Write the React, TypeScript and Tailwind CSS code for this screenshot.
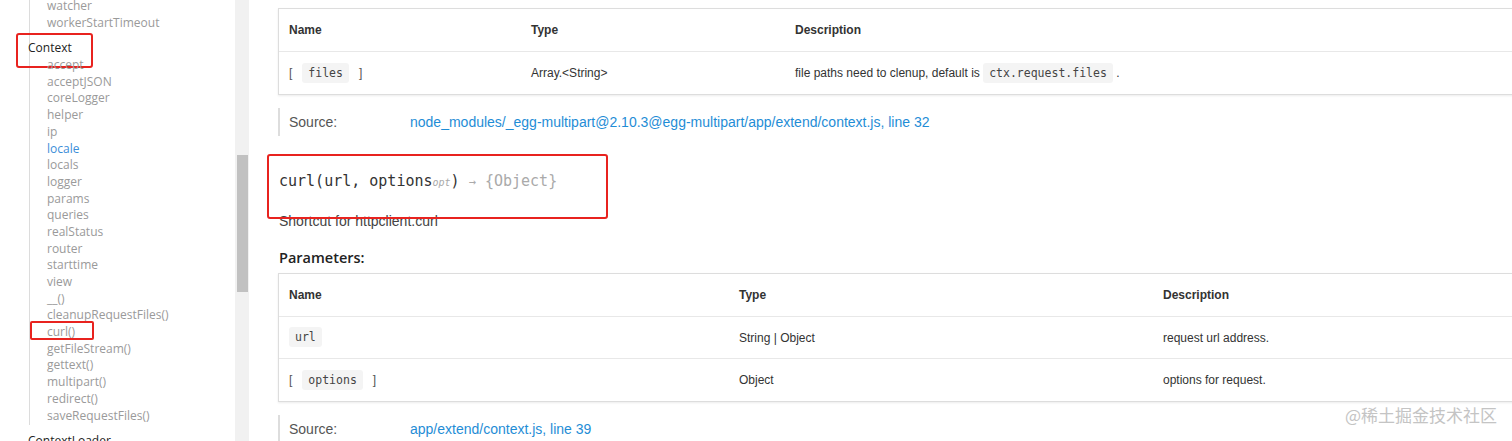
import React from "react";

const navTop = ["watcher", "workerStartTimeout"];
const navContext = [
  "accept",
  "acceptJSON",
  "coreLogger",
  "helper",
  "ip",
  "locale",
  "locals",
  "logger",
  "params",
  "queries",
  "realStatus",
  "router",
  "starttime",
  "view",
  "__()",
  "cleanupRequestFiles()",
  "curl()",
  "getFileStream()",
  "gettext()",
  "multipart()",
  "redirect()",
  "saveRequestFiles()",
];

const sans = { fontFamily: "'Liberation Sans', Arial, sans-serif" };
const mono = { fontFamily: "'DejaVu Sans Mono', 'Liberation Mono', monospace" };

const Code = ({ children }: { children: React.ReactNode }) => (
  <code
    className="rounded-[3px] bg-[#f4f4f4] px-[6px] py-[3px] text-[11.5px] text-[#444]"
    style={mono}
  >
    {children}
  </code>
);

const Optional = ({ children }: { children: React.ReactNode }) => (
  <span className="text-[#555]">
    [<span className="mx-[10px]">
      <Code>{children}</Code>
    </span>]
  </span>
);

const NavItem = ({ label }: { label: string }) => (
  <li className="relative h-[16.7px] leading-[16.7px]">
    <span className={label === "locale" ? "text-[#3b8ed8]" : "text-[#9a9a9a]"}>{label}</span>
    {label === "curl()" && (
      <span className="absolute left-[-17px] top-[-3px] h-[19px] w-[64px] rounded-[2px] border-2 border-[#e8231f]" />
    )}
  </li>
);

const Sidebar = () => (
  <div
    className="w-[235px] shrink-0 overflow-hidden bg-white text-[12px]"
    style={{ fontFamily: "'Open Sans', Lato, sans-serif" }}
  >
    <div className="mt-[-2px] ml-[29px] border-l border-[#dcdcdc] pl-[17px] pb-[1px]">
      <ul>
        {navTop.map((n) => (
          <NavItem key={n} label={n} />
        ))}
      </ul>
      <div className="relative ml-[-19px] mt-[9px] h-[16.7px] leading-[16.7px] text-[12px] text-[#222]">
        Context
        <span className="absolute left-[-12px] top-[-7px] h-[35px] w-[77px] rounded-[3px] border-2 border-[#e8231f]" />
      </div>
      <ul>
        {navContext.map((n) => (
          <NavItem key={n} label={n} />
        ))}
      </ul>
    </div>
    <div className="ml-[28px] mt-[8px] text-[12px] leading-[16.7px] text-[#222]">ContextLoader</div>
  </div>
);

const Scrollbar = () => (
  <div className="w-[14px] shrink-0 bg-[#f1f1f1]">
    <div className="mx-[1.5px] mt-[155px] h-[137px] bg-[#c1c1c1]" />
  </div>
);

type Row = { name: React.ReactNode; type: string; desc: React.ReactNode };

const ParamTable = ({ cols, rows }: { cols: string; rows: Row[] }) => (
  <div
    className="w-[1260px] border border-[#dddddd] bg-white text-[12px] text-[#333] shadow-[0_1px_2px_rgba(0,0,0,0.08)]"
    style={sans}
  >
    <div className={`grid ${cols} h-[43px] items-center border-b border-[#e8e8e8] font-bold`}>
      <div className="pl-[10px]">Name</div>
      <div className="pl-[10px]">Type</div>
      <div className="pl-[10px]">Description</div>
    </div>
    {rows.map((r, i) => (
      <div
        key={i}
        className={`grid ${cols} h-[42px] items-center ${i < rows.length - 1 ? "border-b border-[#e8e8e8]" : ""}`}
      >
        <div className="pl-[10px]">{r.name}</div>
        <div className="pl-[10px]">{r.type}</div>
        <div className="pl-[10px]">{r.desc}</div>
      </div>
    ))}
  </div>
);

const Source = ({ link }: { link: string }) => (
  <div className="flex h-[28px] items-center border-l-2 border-[#dddddd] text-[14px]" style={sans}>
    <span className="w-[130px] shrink-0 pl-[9px] text-[#555]">Source:</span>
    <span className="text-[#1f8dd6]">{link}</span>
  </div>
);

export default function App() {
  return (
    <div className="flex h-[441px] w-[1512px] overflow-hidden bg-white">
      <Sidebar />
      <Scrollbar />
      <main className="relative min-w-0 flex-1 overflow-hidden pl-[29px] pt-[8px]">
        <ParamTable
          cols="grid-cols-[242px_264px_1fr]"
          rows={[
            {
              name: <Optional>files</Optional>,
              type: "Array.<String>",
              desc: (
                <span>
                  file paths need to clenup, default is <Code>ctx.request.files</Code> .
                </span>
              ),
            },
          ]}
        />
        <div className="mt-[13px]">
          <Source link="node_modules/_egg-multipart@2.10.3@egg-multipart/app/extend/context.js, line 32" />
        </div>

        <div className="relative mt-[33px] ml-[1px] text-[15px] leading-[24px] text-[#333]" style={mono}>
          curl(url, options
          <span className="text-[10px] italic text-[#aaa]">opt</span>){" "}
          <span className="text-[12px] text-[#aaa]">→</span> <span className="text-[#aaa]">{"{Object}"}</span>
          <span className="absolute left-[-12px] top-[-15px] h-[65px] w-[341px] rounded-[3px] border-2 border-[#e8231f]" />
        </div>
        <p className="mt-[18px] ml-[1px] text-[14px] leading-[16px] text-[#444]" style={sans}>
          Shortcut for httpclient.curl
        </p>
        <h5
          className="mt-[20px] ml-[1px] text-[14.5px] font-semibold leading-[18px] text-[#222]"
          style={{ fontFamily: "'Open Sans', Lato, sans-serif" }}
        >
          Parameters:
        </h5>
        <div className="mt-[6px]">
          <ParamTable
            cols="grid-cols-[450px_424px_1fr]"
            rows={[
              { name: <Code>url</Code>, type: "String | Object", desc: "request url address." },
              { name: <Optional>options</Optional>, type: "Object", desc: "options for request." },
            ]}
          />
        </div>
        <div className="mt-[13px]">
          <Source link="app/extend/context.js, line 39" />
        </div>

        <div
          className="absolute right-[15px] top-[402px] text-[17px] text-[#c4c4c4]"
          style={{ fontFamily: "'Noto Sans CJK SC', sans-serif" }}
        >
          @稀土掘金技术社区
        </div>
      </main>
    </div>
  );
}
